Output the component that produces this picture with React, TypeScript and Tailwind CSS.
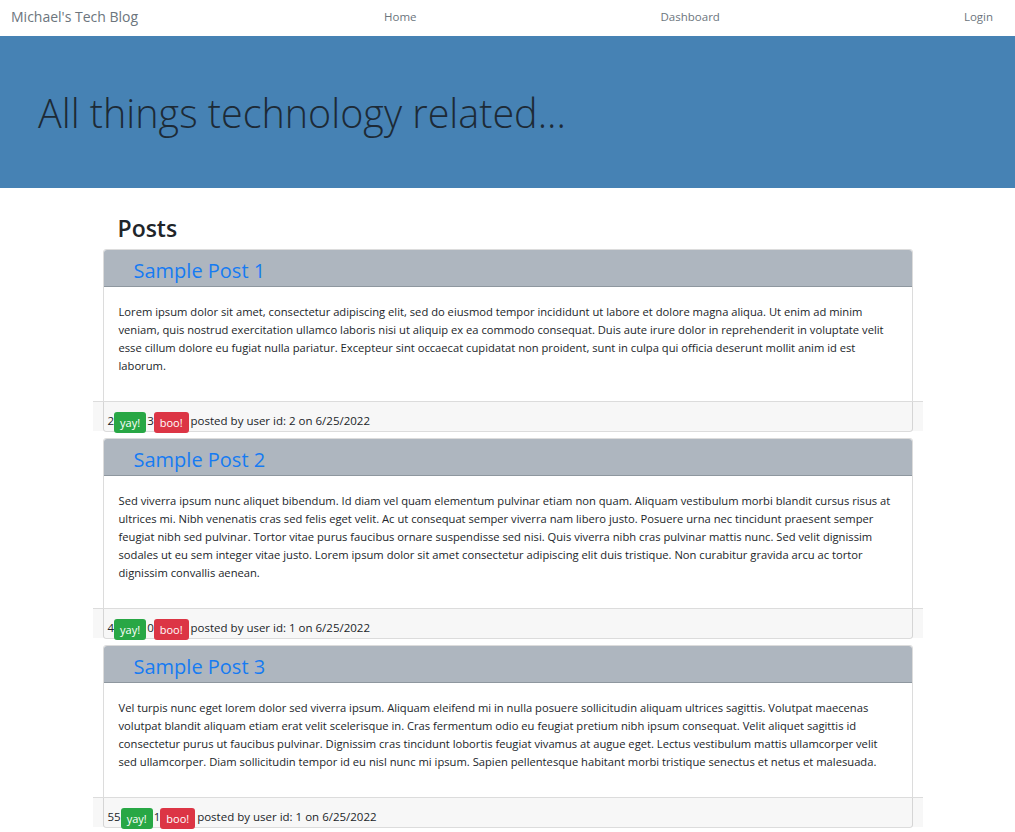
const posts = [
  {
    id: 1,
    title: "Sample Post 1",
    body: "Lorem ipsum dolor sit amet, consectetur adipiscing elit, sed do eiusmod tempor incididunt ut labore et dolore magna aliqua. Ut enim ad minim veniam, quis nostrud exercitation ullamco laboris nisi ut aliquip ex ea commodo consequat. Duis aute irure dolor in reprehenderit in voluptate velit esse cillum dolore eu fugiat nulla pariatur. Excepteur sint occaecat cupidatat non proident, sunt in culpa qui officia deserunt mollit anim id est laborum.",
    yay: 2,
    boo: 3,
    userId: 2,
    date: "6/25/2022",
  },
  {
    id: 2,
    title: "Sample Post 2",
    body: "Sed viverra ipsum nunc aliquet bibendum. Id diam vel quam elementum pulvinar etiam non quam. Aliquam vestibulum morbi blandit cursus risus at ultrices mi. Nibh venenatis cras sed felis eget velit. Ac ut consequat semper viverra nam libero justo. Posuere urna nec tincidunt praesent semper feugiat nibh sed pulvinar. Tortor vitae purus faucibus ornare suspendisse sed nisi. Quis viverra nibh cras pulvinar mattis nunc. Sed velit dignissim sodales ut eu sem integer vitae justo. Lorem ipsum dolor sit amet consectetur adipiscing elit duis tristique. Non curabitur gravida arcu ac tortor dignissim convallis aenean.",
    yay: 4,
    boo: 0,
    userId: 1,
    date: "6/25/2022",
  },
  {
    id: 3,
    title: "Sample Post 3",
    body: "Vel turpis nunc eget lorem dolor sed viverra ipsum. Aliquam eleifend mi in nulla posuere sollicitudin aliquam ultrices sagittis. Volutpat maecenas volutpat blandit aliquam etiam erat velit scelerisque in. Cras fermentum odio eu feugiat pretium nibh ipsum consequat. Velit aliquet sagittis id consectetur purus ut faucibus pulvinar. Dignissim cras tincidunt lobortis feugiat vivamus at augue eget. Lectus vestibulum mattis ullamcorper velit sed ullamcorper. Diam sollicitudin tempor id eu nisl nunc mi ipsum. Sapien pellentesque habitant morbi tristique senectus et netus et malesuada.",
    yay: 55,
    boo: 1,
    userId: 1,
    date: "6/25/2022",
  },
];

function Navbar() {
  return (
    <nav className="flex items-center h-9 pb-[3px] px-[11px] bg-white text-[11.5px] text-[#6c757d]">
      <div className="w-[373px] shrink-0 text-[14px] text-[#6c757d]">Michael's Tech Blog</div>
      <div className="flex-1 flex justify-between pr-[11px]">
        <a className="cursor-pointer">Home</a>
        <a className="cursor-pointer">Dashboard</a>
        <a className="cursor-pointer">Login</a>
      </div>
    </nav>
  );
}

function PostCard({ post }: { post: (typeof posts)[number] }) {
  return (
    <div className="border border-[#dcdcdc] rounded-[3px] mb-[6px]">
      {/* header */}
      <div className="h-[37px] bg-[#aeb6bf] border-b border-[#8e979f] pl-[30px] flex items-end pb-[5px] rounded-t-[3px]">
        <h3 className="text-[20px] leading-none text-[#167bf2] font-medium">{post.title}</h3>
      </div>
      {/* body */}
      <div className="px-[15px] pt-[16px] pb-[14px]">
        <p className="text-[11.2px] leading-[18px] text-[#212529] mb-[12px]">{post.body}</p>
      </div>
      {/* footer, bootstrap row negative margins */}
      <div className="-mx-[11px] h-[30px] border-t border-[#dcdcdc] bg-black/[0.03] pl-[15px] pt-[10px] flex items-start text-[11.5px] leading-[18px] text-[#212529]">
        <span>{post.yay}</span>
        <span className="bg-[#28a745] text-white text-[11px] leading-[13px] px-[6px] pt-[4px] pb-[4px] rounded-[3px]">yay!</span>
        <span className="ml-[1px]">{post.boo}</span>
        <span className="bg-[#dc3545] text-white text-[11px] leading-[13px] px-[6px] pt-[4px] pb-[4px] rounded-[3px] mr-[2px]">boo!</span>
        <span>posted by user id: {post.userId} on {post.date}</span>
      </div>
    </div>
  );
}

export default function App() {
  return (
    <div className="min-h-screen bg-white font-['Open_Sans',sans-serif] text-[#212529]">
      <Navbar />
      <header className="h-[152px] bg-[#4682b4] pl-[38px] pt-[52px]">
        <h1 className="text-[39.5px] font-light leading-[50px] text-[#1d2a36]">All things technology related...</h1>
      </header>
      <main className="w-[810px] mx-auto pt-[25px]">
        <h2 className="pl-[15px] text-[23px] font-semibold leading-[30px] mb-[6px] text-[#212529]">Posts</h2>
        {posts.map((p) => (
          <PostCard key={p.id} post={p} />
        ))}
      </main>
    </div>
  );
}
